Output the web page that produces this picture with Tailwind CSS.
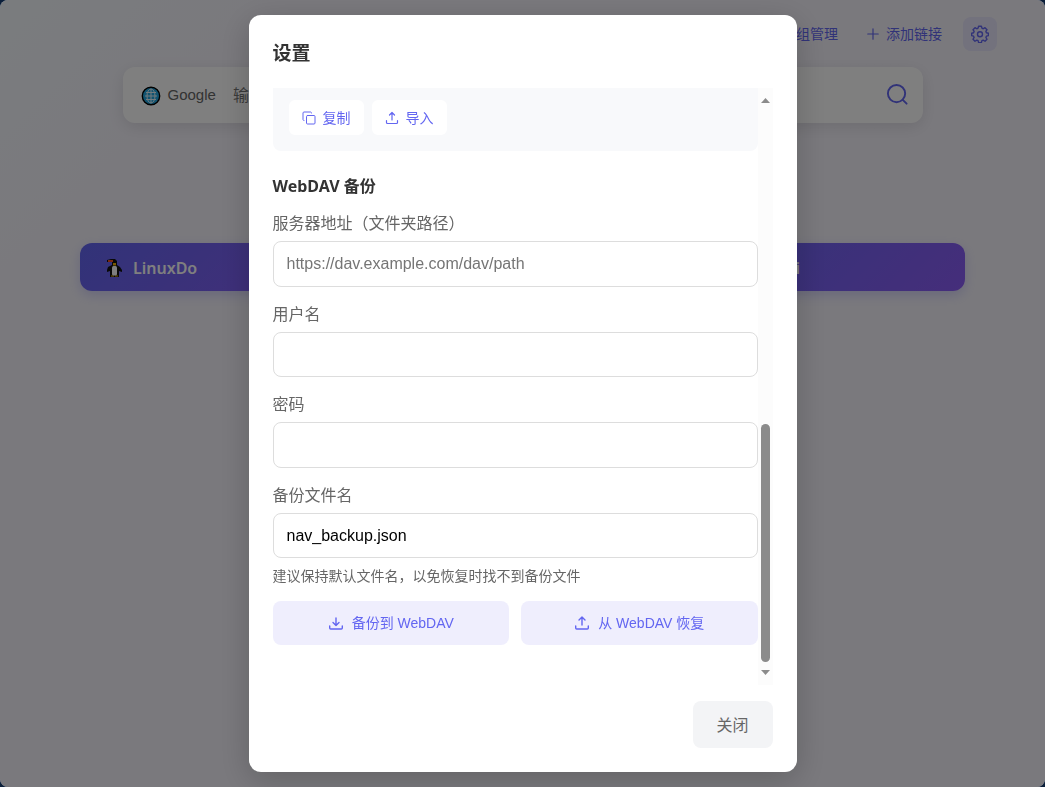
<!DOCTYPE html>
<html lang="zh-CN">
<head>
<meta charset="utf-8">
<meta name="viewport" content="width=device-width, initial-scale=1">
<title>设置</title>
<script src="https://cdn.jsdelivr.net/npm/@tailwindcss/browser@4"></script>
</head>
<body class="min-h-screen bg-[#0b1f3a] font-['Liberation_Sans','Noto_Sans_CJK_SC',sans-serif]">

<div class="relative min-h-screen overflow-hidden rounded-lg bg-linear-135 from-[#f5f9fd] via-[#f5f3fb] via-15% to-[#f5f3fb]">
  <header class="flex h-[67px] items-center justify-end pr-12 text-sm text-[#6366f1]">
    <button class="mr-7 flex items-center gap-1.5">
      <svg class="size-3.5" viewBox="0 0 24 24" fill="none" stroke="currentColor" stroke-width="2"><path d="M3 3h7v7H3zM14 3h7v7h-7zM14 14h7v7h-7zM3 14h7v7H3z"/></svg>
      分组管理
    </button>
    <button class="mr-[21px] flex items-center gap-1.5">
      <svg class="size-3.5" viewBox="0 0 24 24" fill="none" stroke="currentColor" stroke-width="2" stroke-linecap="round"><path d="M12 3v18M3 12h18"/></svg>
      添加链接
    </button>
    <button aria-label="设置" class="flex size-[34px] items-center justify-center rounded-lg bg-[#6366f1]/10">
      <svg class="size-[18px]" viewBox="0 0 18 18" fill="none" stroke="currentColor" stroke-width="1.4" stroke-linejoin="round"><path d="M7.600 1.200h2.800l.5 2 1.300.55 1.800-1.100 2 2-1.100 1.800.5 1.250 2 .5v2.400l-2 .6-.5 1.250 1.100 1.800-2 2-1.800-1.100-1.300.55-.5 2H7.600l-.5-2-1.300-.55L4 16.250l-2-2 1.100-1.800-.5-1.250-1.950-.6V8.200l1.950-.5.5-1.250L2 4.650l2-2 1.800 1.100 1.300-.55z"/><circle cx="9" cy="9.200" r="2.500"/></svg>
    </button>
  </header>

  <form class="mx-auto flex h-14 max-w-[800px] items-center rounded-xl bg-white pt-px pl-[18px] pr-3.5 shadow-[0_4px_16px_rgba(0,0,0,0.1)]">
    <button type="button" class="flex items-center gap-[7px] text-[15px] text-[#666]">
      <svg class="size-5" viewBox="0 0 20 20"><circle cx="10" cy="10" r="8.700" fill="#22a7e0" stroke="#000" stroke-width="1.400"/><g fill="none" stroke="#e5f4fb" stroke-width="1"><path d="M10 3v14M4 10h12M5 6.500h10M5 13.500h10"/><ellipse cx="10" cy="10" rx="4" ry="7"/></g></svg>
      Google
    </button>
    <input aria-label="搜索" placeholder="输入搜索内容" class="min-w-0 flex-1 px-[17px] text-base outline-none placeholder:text-[#757575]">
    <button type="button" aria-label="搜索" class="text-[#6366f1]">
      <svg class="size-[23px]" viewBox="0 0 24 24" fill="none" stroke="currentColor" stroke-width="2" stroke-linecap="round"><circle cx="11" cy="10" r="9"/><path d="m17.500 16.500 4 4"/></svg>
    </button>
  </form>

  <main class="mt-[120px] grid grid-cols-3 gap-5 px-20 font-['Noto_Sans','Noto_Sans_CJK_SC',sans-serif] text-base font-semibold text-white">
    <a href="#" class="flex h-12 items-center gap-2 rounded-xl bg-linear-135 from-[#6366f1] to-[#8b5cf6] px-6 pt-0.5 shadow-[0_4px_12px_rgba(99,102,241,0.25)]">
      <svg class="size-5" viewBox="0 0 20 20"><path fill="#111" d="M7 1h4l2 2v4l3 2 2 3v2l-3-1v6H6v-6l-3 1v-2l1-3 4-2V4L3 4V2z"/><path fill="#f4511e" d="M4 2h5v2H4z"/><path fill="#f4b400" d="M9 5h3v2.500H9zM7 17.500h3v1H7zM11 17.500h3v1h-3z"/><rect x="8" y="8" width="5" height="9.500" rx="1.500" fill="#fff"/></svg>
      <span class="pl-px">LinuxDo</span>
    </a>
    <a href="#" class="h-12 rounded-xl bg-linear-135 from-[#6366f1] to-[#8b5cf6]" aria-label="链接"></a>
    <a href="#" class="flex h-12 items-center rounded-xl bg-linear-135 from-[#6366f1] to-[#8b5cf6] pt-0.5 pl-[61px] shadow-[0_4px_12px_rgba(99,102,241,0.25)]">Gemini</a>
  </main>
</div>

<div class="fixed inset-0 flex items-center justify-center overflow-hidden rounded-lg bg-black/50">
  <section role="dialog" aria-modal="true" aria-labelledby="dlg" class="w-full max-w-[548px] rounded-xl bg-white p-6 shadow-[0_8px_32px_rgba(0,0,0,0.2)]">
    <h2 id="dlg" class="mb-6 font-['Noto_Sans_CJK_SC',sans-serif] text-[19px] leading-[25px] font-bold text-[#333]">设置</h2>

    <div class="flex">
      <div class="min-w-0 flex-1 pb-10 text-[#666]">
        <div class="flex gap-2 rounded-b-lg bg-[#f8f9fb] px-4 pt-3 pb-4 text-sm text-[#6366f1]">
          <button class="flex h-[35px] items-center gap-[7px] rounded-md bg-white px-[13px]">
            <svg class="size-3.5" viewBox="0 0 14 14" fill="none" stroke="currentColor" stroke-linecap="round" stroke-linejoin="round"><rect x="4.500" y="4.500" width="8.500" height="8.500" rx="1"/><path d="M2 9.500c-.8 0-1-.5-1-1V2c0-.6.4-1 1-1h6.500c.6 0 1 .4 1 1"/></svg>
            复制
          </button>
          <button class="flex h-[35px] items-center gap-[7px] rounded-md bg-white px-[13px]">
            <svg class="size-3.5" viewBox="0 0 14 14" fill="none" stroke="currentColor" stroke-width="1.200" stroke-linecap="round" stroke-linejoin="round"><path d="M1.500 9.500v2c0 .6.4 1 1 1h9c.6 0 1-.4 1-1v-2M4.500 4 7 1.500 9.500 4M7 1.500v7.500"/></svg>
            导入
          </button>
        </div>

        <h3 class="mt-[23px] mb-3.5 font-['Noto_Sans','Noto_Sans_CJK_SC',sans-serif] text-base leading-6 font-bold text-[#333]">WebDAV 备份</h3>

        <div class="flex flex-col gap-4">
          <div>
            <label for="url" class="mb-[5px] block text-base leading-6">服务器地址（文件夹路径）</label>
            <input id="url" placeholder="https://dav.example.com/dav/path" class="block h-[46px] w-full rounded-lg border border-[#ddd] px-[13px] text-base text-black placeholder:text-[#757575]">
          </div>
          <div>
            <label for="user" class="mb-[5px] block text-base leading-6">用户名</label>
            <input id="user" class="block h-[45px] w-full rounded-lg border border-[#ddd] px-[13px] text-base text-black">
          </div>
          <div>
            <label for="pass" class="mb-[5px] block text-base leading-6">密码</label>
            <input id="pass" type="password" class="block h-[46px] w-full rounded-lg border border-[#ddd] px-[13px] text-base text-black">
          </div>
          <div>
            <label for="file" class="mb-[5px] block text-base leading-6">备份文件名</label>
            <input id="file" value="nav_backup.json" class="block h-[45px] w-full rounded-lg border border-[#ddd] px-[13px] text-base text-black">
            <p class="mt-2 text-sm leading-5">建议保持默认文件名，以免恢复时找不到备份文件</p>
          </div>
        </div>

        <div class="mt-[15px] grid grid-cols-2 gap-3 text-sm text-[#6366f1]">
          <button class="flex h-11 items-center justify-center gap-2 rounded-lg bg-[#efeefd]">
            <svg class="size-4" viewBox="0 0 16 16" fill="none" stroke="currentColor" stroke-width="1.400" stroke-linecap="round" stroke-linejoin="round"><path d="M1.700 11v2c0 .6.4 1 1 1h10.600c.6 0 1-.4 1-1v-2M5 7.500l3 3 3-3M8 3v7.500"/></svg>
            备份到 WebDAV
          </button>
          <button class="flex h-11 items-center justify-center gap-2 rounded-lg bg-[#efeefd]">
            <svg class="size-4" viewBox="0 0 16 16" fill="none" stroke="currentColor" stroke-width="1.400" stroke-linecap="round" stroke-linejoin="round"><path d="M1.700 11v2c0 .6.4 1 1 1h10.600c.6 0 1-.4 1-1v-2M5 5l3-3 3 3M8 2v8"/></svg>
            从 WebDAV 恢复
          </button>
        </div>
      </div>

      <div aria-hidden="true" class="flex w-[15px] flex-col items-center bg-[#fcfcfc] pt-2.5 pb-2.5">
        <svg class="h-[5px] w-[9px]" viewBox="0 0 9 5"><path fill="#8b8b8b" d="M4.500 0 9 5H0z"/></svg>
        <div class="flex-1"></div>
        <div class="h-[238px] w-[9px] rounded-full bg-[#8b8b8b]"></div>
        <svg class="mt-2 h-[5px] w-[9px]" viewBox="0 0 9 5"><path fill="#8b8b8b" d="M0 0h9L4.500 5z"/></svg>
      </div>
    </div>

    <div class="mt-4 flex justify-end">
      <button class="h-[47px] w-20 rounded-lg bg-[#f3f4f6] pt-0.5 text-base text-[#666]">关闭</button>
    </div>
  </section>
</div>
</body>
</html>
